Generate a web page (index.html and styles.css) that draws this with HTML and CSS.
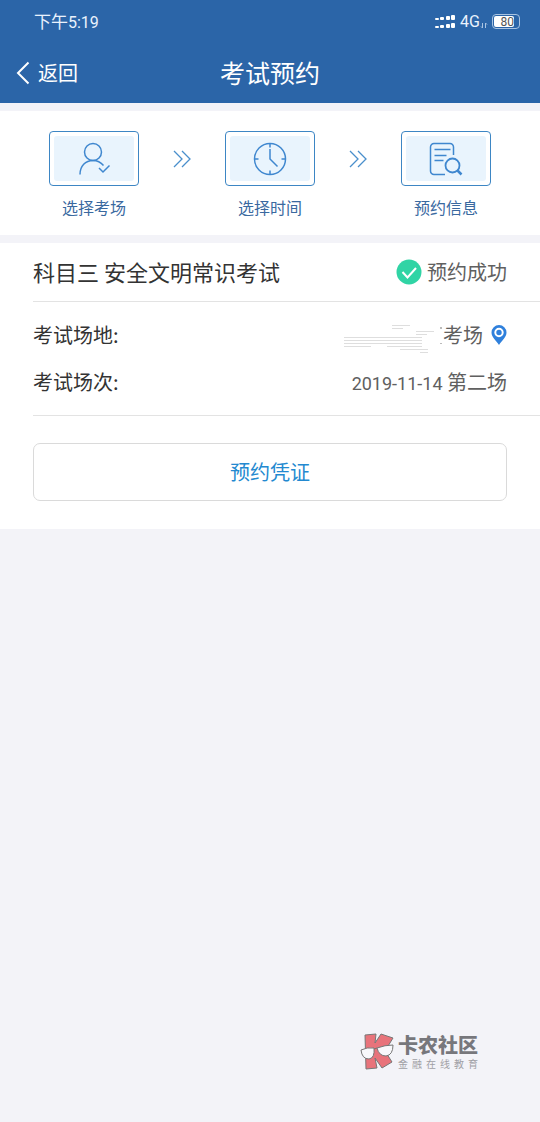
FILE: index.html
```html
<!DOCTYPE html>
<html lang="zh-CN">
<head>
<meta charset="utf-8">
<meta name="viewport" content="width=device-width, initial-scale=1">
<title>考试预约</title>
<link rel="stylesheet" href="styles.css">
</head>
<body>
<header class="header">
  <div class="status">
    <span class="status-time">下午<span class="latin">5:19</span></span>
    <div class="status-right">
      <svg class="signal" width="22" height="16" viewBox="0 0 22 16" fill="#fff" aria-hidden="true">
        <rect x="1" y="4" width="4" height="2" rx="1"/><rect x="6" y="3" width="4" height="3" rx="1"/><rect x="12" y="2" width="4" height="4" rx="1"/><rect x="17" y="1" width="4" height="5" rx="1"/>
        <rect x="1" y="12" width="4" height="2" rx="1"/><rect x="6" y="11" width="4" height="3" rx="1"/><rect x="12" y="10" width="4" height="4" rx="1"/><rect x="17" y="9" width="4" height="5" rx="1"/>
      </svg>
      <span class="network">4G</span>
      <svg class="traffic" width="8" height="16" viewBox="0 0 8 16" fill="none" stroke="#a9c4e2" aria-hidden="true"><path d="M2.500 9v5L1 12.500M5.500 14V9L7 10.500"/></svg>
      <span class="battery"><span class="battery-level">80</span></span>
    </div>
  </div>
  <nav class="nav">
    <a class="back" href="#">
      <svg width="14" height="24" viewBox="0 0 14 24" fill="none" stroke="#fff" stroke-width="2" aria-hidden="true"><path d="M12.500 1.500 2 12l10.500 10.500"/></svg>
      返回
    </a>
    <h1 class="title">考试预约</h1>
  </nav>
</header>

<main>
  <section class="steps">
    <div class="step">
      <div class="step-box"><div class="step-fill">
        <svg width="34" height="34" viewBox="0 0 34 34" fill="none" stroke="#3f87cf" stroke-width="1.500" aria-hidden="true"><circle cx="16" cy="10" r="8.500"/><path d="M3 32.500C3 24 8.500 18.500 16 18.500c4.500 0 8 2 10.500 5M22 26l4 4 6.500-6.500"/></svg>
      </div></div>
      <span class="step-label">选择考场</span>
    </div>
    <svg class="arrow" width="18" height="18" viewBox="0 0 18 18" fill="none" stroke="#4a8fcc" stroke-width="1.300" aria-hidden="true"><path d="M1 1l8 8-8 8M9 1l8 8-8 8"/></svg>
    <div class="step">
      <div class="step-box"><div class="step-fill">
        <svg width="34" height="34" viewBox="0 0 34 34" fill="none" stroke="#3f87cf" stroke-width="1.500" aria-hidden="true"><circle cx="17" cy="17" r="15.500"/><path d="M17 1.500v4M17 28.500v4M1.500 17h4M28.500 17h4M17 7v10l7.500 7.500"/></svg>
      </div></div>
      <span class="step-label">选择时间</span>
    </div>
    <svg class="arrow" width="18" height="18" viewBox="0 0 18 18" fill="none" stroke="#4a8fcc" stroke-width="1.300" aria-hidden="true"><path d="M1 1l8 8-8 8M9 1l8 8-8 8"/></svg>
    <div class="step">
      <div class="step-box"><div class="step-fill">
        <svg width="34" height="34" viewBox="0 0 34 34" fill="none" stroke="#3f87cf" stroke-width="1.500" aria-hidden="true"><path d="M24.500 13V5a3.500 3.500 0 0 0-3.500-3.500H5A3.500 3.500 0 0 0 1.500 5v24A3.500 3.500 0 0 0 5 32.500h11M5.500 7.500h16M5.500 13.500h12M5.500 18.500h9"/><circle cx="23.500" cy="23.500" r="7" stroke-width="1.800"/><path d="M28.500 28.500l4 4" stroke-width="2.500"/></svg>
      </div></div>
      <span class="step-label">预约信息</span>
    </div>
  </section>

  <section class="card">
    <div class="card-head">
      <h2 class="subject">科目三 安全文明常识考试</h2>
      <div class="result">
        <svg width="26" height="26" viewBox="0 0 26 26" aria-hidden="true"><circle cx="13" cy="13" r="12.500" fill="#30d4a5"/><path d="M6.500 13l5 5.500L20 9" fill="none" stroke="#fff" stroke-width="2"/></svg>
        <span>预约成功</span>
      </div>
    </div>
    <dl class="details">
      <div class="row">
        <dt>考试场地:</dt>
        <dd class="place">
          <svg class="masked" width="100" height="28" viewBox="0 0 100 28" fill="none" stroke="#dedede" aria-hidden="true"><path d="M49 4.500h18M49 7.500h11M73 10.500h18M73 13.500h11M1 16.500h78M1 19.500h78M1 22.500h78M1 25.500h27M44 25.500h35M57 28.500h28M77 31.500h8"/><path d="M98 6v2M98 22v1" stroke="#777"/></svg>
          <span>考场</span>
          <svg class="pin" width="16" height="20" viewBox="0 0 16 20" aria-hidden="true"><path d="M8 0a7.500 7.500 0 0 0-7.500 7.500C.5 12 5 15.500 8 20c3-4.500 7.500-8 7.500-12.500A7.500 7.500 0 0 0 8 0z" fill="#2f80dc"/><circle cx="8" cy="7.500" r="3.700" fill="#2f80dc" stroke="#fff" stroke-width="2"/></svg>
        </dd>
      </div>
      <div class="row">
        <dt>考试场次:</dt>
        <dd><span class="latin date">2019-11-14</span> 第二场</dd>
      </div>
    </dl>
    <div class="actions"><button class="voucher" type="button">预约凭证</button></div>
  </section>
</main>

<aside class="watermark">
  <svg width="36" height="38" viewBox="0 0 36 38" aria-hidden="true">
    <path d="M5 2l11-1-1 9 6-9 12 4-8 13 7 11-10 6-7-10 2 10-11 1z" fill="#e8737b" stroke="#777" stroke-linejoin="round"/>
    <path d="M1 17q6-3 13-2 1 10-5 11-7 0-8-9zM17 15q8-3 16-3 0 10-7 11-7 0-9-8z" fill="#f8f8fb" stroke="#777"/><path d="M14 16l3-1" stroke="#777"/>
  </svg>
  <div class="brand"><strong>卡农社区</strong><span>金融在线教育</span></div>
</aside>
</body>
</html>
```
FILE: styles.css
```css
* {
  box-sizing: border-box;
}

body {
  margin: 0;
  min-height: 100vh;
  position: relative;
  background: #f3f3f8;
  color: #333;
  font-family: "Noto Sans CJK SC", sans-serif;
  font-size: 20px;
  line-height: 28px;
}

h1, h2, dl, dd {
  margin: 0;
  font-weight: 400;
}

.latin {
  font-family: Roboto, sans-serif;
}

.header {
  background: #2b65a8;
  color: #fff;
}

.status {
  display: flex;
  justify-content: space-between;
  align-items: center;
  height: 43px;
  padding: 0 20px 0 34px;
  color: #eaf2fd;
}

.status-time {
  font-size: 17px;
}

.status-time .latin {
  font-size: 16px;
}

.status-right {
  display: flex;
  align-items: center;
}

.network {
  margin-left: 4px;
  font-family: Roboto, sans-serif;
  font-size: 16px;
}

.battery {
  margin-left: 4px;
  padding: 1px;
  width: 28px;
  height: 15px;
  border: 1px solid #a9c4e2;
  border-radius: 4px;
}

.battery-level {
  display: block;
  width: 20px;
  height: 11px;
  border-radius: 2px;
  background: #fff;
  color: #555;
  font-family: Roboto, sans-serif;
  font-size: 12px;
  line-height: 12px;
  text-align: right;
}

.nav {
  display: grid;
  grid-template-columns: 1fr auto 1fr;
  align-items: center;
  height: 60px;
  padding: 0 16px;
}

.back {
  display: flex;
  align-items: center;
  gap: 8px;
  color: #fff;
  text-decoration: none;
}

.title {
  padding-bottom: 2px;
  font-size: 25px;
  line-height: 36px;
}

.steps {
  display: flex;
  justify-content: space-between;
  margin-top: 8px;
  padding: 20px 49px 14px;
  background: #fff;
}

.step {
  display: flex;
  flex-direction: column;
  align-items: center;
  gap: 7px;
}

.step-box {
  width: 90px;
  height: 55px;
  padding: 4px;
  border: 1px solid #3d86c4;
  border-radius: 4px;
}

.step-fill {
  display: grid;
  place-items: center;
  height: 100%;
  border-radius: 3px;
  background: #e9f4fd;
}

.step-label {
  color: #3a699f;
  font-size: 16px;
}

.arrow {
  margin-top: 19px;
}

.card {
  margin-top: 8px;
  padding-left: 33px;
  background: #fff;
}

.card-head {
  display: flex;
  justify-content: space-between;
  align-items: center;
  height: 59px;
  padding-right: 33px;
  border-bottom: 1px solid #e3e3e3;
}

.subject {
  padding-bottom: 2px;
  font-size: 22px;
}

.result {
  display: flex;
  align-items: center;
  gap: 5px;
  color: #606060;
}

.details {
  display: grid;
  gap: 19px;
  padding: 19px 33px 17px 0;
  border-bottom: 1px solid #e3e3e3;
}

.row {
  display: flex;
  justify-content: space-between;
}

.row dd {
  color: #606060;
}

.row .place {
  display: flex;
  align-items: center;
}

.masked {
  overflow: visible;
}

.pin {
  margin-left: 8px;
}

.date {
  font-size: 18px;
}

.actions {
  padding: 27px 33px 28px 0;
}

.voucher {
  width: 100%;
  padding: 14px;
  border: 1px solid #dadada;
  border-radius: 7px;
  background: #fff;
  color: #2389d0;
  font: inherit;
}

.watermark {
  position: absolute;
  right: 62px;
  bottom: 51px;
  display: flex;
  align-items: center;
  gap: 2px;
  color: #77777c;
}

.brand {
  display: grid;
}

.brand strong {
  font-size: 20px;
  font-weight: 900;
  line-height: 24px;
}

.brand span {
  color: #a0a0a5;
  font-size: 10px;
  line-height: 14px;
  text-align-last: justify;
}
```
